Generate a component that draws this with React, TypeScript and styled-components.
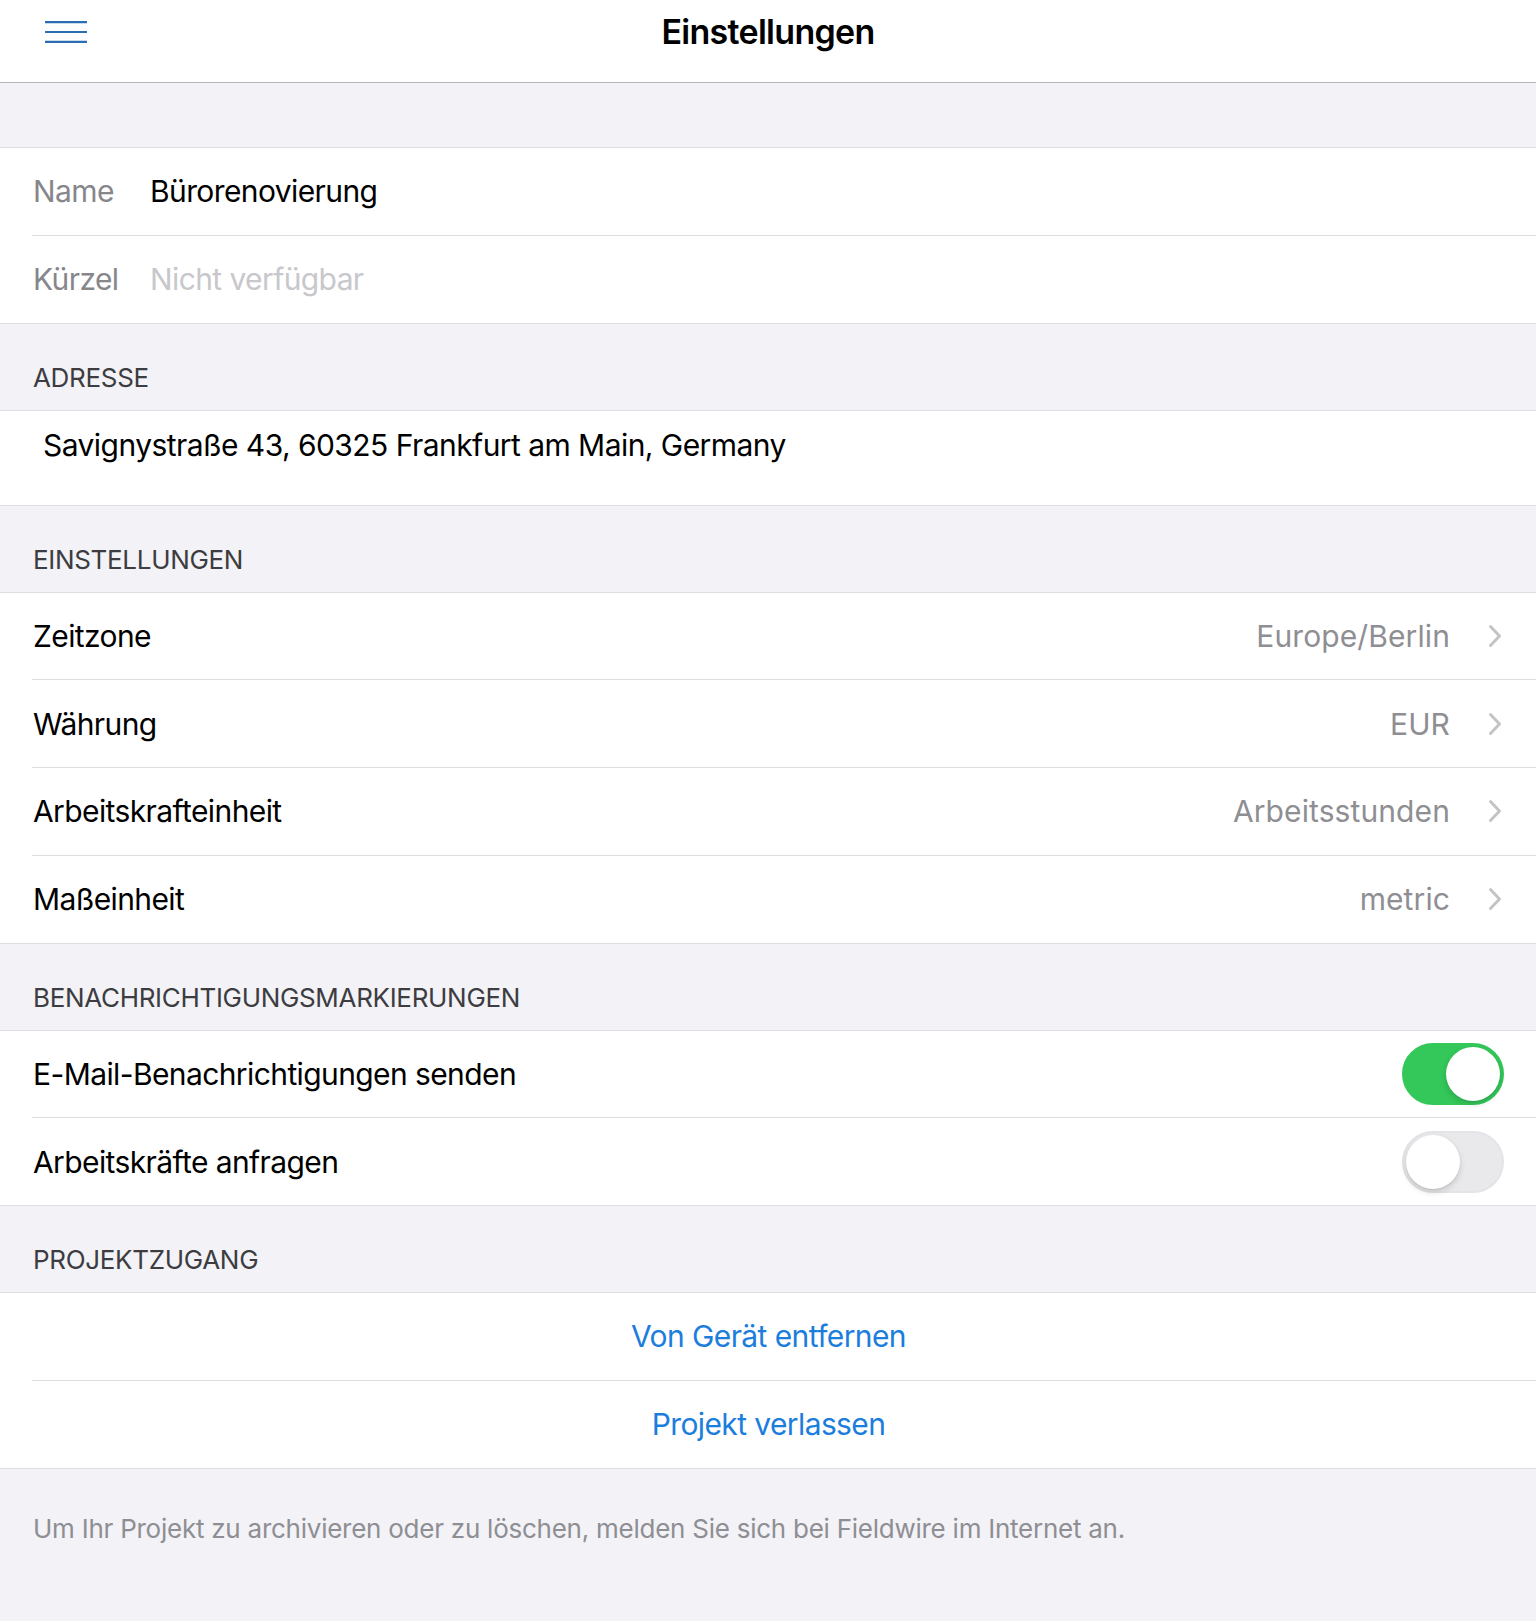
import React from "react";
import styled, { createGlobalStyle } from "styled-components";

const GlobalStyle = createGlobalStyle`
  html, body {
    margin: 0;
    padding: 0;
    background: #f2f2f7;
  }
  body {
    font-family: Inter, "Noto Sans", "Liberation Sans", sans-serif;
    -webkit-font-smoothing: antialiased;
  }
  * { box-sizing: border-box; }
`;

const SEP = "#dedee2";

const Page = styled.div`
  min-height: 1621px;
  background: #f2f2f7;
  display: flex;
  flex-direction: column;
`;

const TopBar = styled.header`
  height: 83px;
  background: #ffffff;
  border-bottom: 1px solid #b4b4b8;
  display: grid;
  grid-template-columns: 1fr auto 1fr;
  align-items: start;
`;

const MenuButton = styled.button`
  justify-self: start;
  margin: 21px 0 0 45px;
  padding: 0;
  border: 0;
  background: transparent;
  width: 42px;
  height: 22px;
  display: flex;
  cursor: pointer;
`;

const Title = styled.h1`
  margin: 12px 0 0;
  font-size: 34px;
  line-height: 40px;
  font-weight: 600;
  color: #000;
  letter-spacing: -0.7px;
`;

const Spacer = styled.div`
  height: 64px;
`;

const Group = styled.section`
  background: #ffffff;
  border-top: 1px solid ${SEP};
  border-bottom: 1px solid ${SEP};
`;

const SectionHeader = styled.h2`
  margin: 0;
  height: 86px;
  padding: 38px 33px 0;
  font-size: 26px;
  line-height: 32px;
  font-weight: 400;
  color: #3c3c41;
  text-transform: uppercase;
  letter-spacing: -0.32px;
`;

const Row = styled.div<{ $center?: boolean }>`
  box-sizing: content-box;
  height: 86.75px;
  margin-left: 32px;
  padding: 0 32px 0 1px;
  display: flex;
  align-items: center;
  justify-content: ${(p) => (p.$center ? "center" : "flex-start")};
  font-size: 30px;
  line-height: 36px;
  letter-spacing: -0.6px;
  color: #000;
  & + & {
    border-top: 1px solid ${SEP};
  }
`;

const FieldLabel = styled.span`
  width: 117px;
  flex: none;
  color: #86868b;
`;

const FieldValue = styled.span<{ $placeholder?: boolean }>`
  color: ${(p) => (p.$placeholder ? "#c7c7cc" : "#000")};
`;

const AddressRow = styled.div`
  height: 94px;
  padding: 16px 32px 0 43px;
  font-size: 30px;
  line-height: 36px;
  letter-spacing: -0.55px;
  color: #000;
`;

const Label = styled.span`
  flex: 1;
`;

const Value = styled.span`
  color: #8e8e93;
  margin-right: 38px;
  letter-spacing: 0.1px;
`;

const Chevron = styled.svg`
  width: 14px;
  height: 24px;
  flex: none;
  margin-right: 2px;
`;

const SwitchTrack = styled.button<{ $on: boolean }>`
  position: relative;
  width: 102px;
  height: 62px;
  flex: none;
  padding: 0;
  border-radius: 31px;
  border: 2px solid ${(p) => (p.$on ? "#34c759" : "#e4e4e8")};
  background: ${(p) => (p.$on ? "#34c759" : "#e9e9eb")};
  cursor: pointer;
`;

const SwitchKnob = styled.span<{ $on: boolean }>`
  position: absolute;
  top: 2px;
  left: ${(p) => (p.$on ? "42px" : "2px")};
  width: 54px;
  height: 54px;
  border-radius: 50%;
  background: #ffffff;
  box-shadow: 0 3px 6px rgba(0, 0, 0, 0.15), 0 1px 1px rgba(0, 0, 0, 0.08);
`;

const ActionText = styled.span`
  color: #1b7ddc;
`;

const Footer = styled.p`
  margin: 0;
  padding: 44px 33px 0;
  font-size: 26px;
  line-height: 32px;
  letter-spacing: -0.25px;
  color: #8e8e93;
`;

const ChevronIcon = () => (
  <Chevron viewBox="0 0 14 24" fill="none">
    <polyline
      points="2.5,2.5 11.5,12 2.5,21.5"
      stroke="#c4c4c8"
      strokeWidth="3"
      strokeLinecap="round"
      strokeLinejoin="round"
    />
  </Chevron>
);

const Switch = ({ on }: { on: boolean }) => (
  <SwitchTrack $on={on} aria-pressed={on}>
    <SwitchKnob $on={on} />
  </SwitchTrack>
);

const settings = [
  { label: "Zeitzone", value: "Europe/Berlin" },
  { label: "Währung", value: "EUR" },
  { label: "Arbeitskrafteinheit", value: "Arbeitsstunden" },
  { label: "Maßeinheit", value: "metric" },
];

export default function App() {
  return (
    <Page>
      <GlobalStyle />
      <TopBar>
        <MenuButton aria-label="Menü">
          <svg width="42" height="22" viewBox="0 0 42 22">
            <g stroke="#2a6db2" strokeWidth="2.2">
              <line x1="0" y1="1.2" x2="42" y2="1.2" />
              <line x1="0" y1="11" x2="42" y2="11" />
              <line x1="0" y1="20.8" x2="42" y2="20.8" />
            </g>
          </svg>
        </MenuButton>
        <Title>Einstellungen</Title>
        <div />
      </TopBar>

      <Spacer />

      <Group>
        <Row>
          <FieldLabel>Name</FieldLabel>
          <FieldValue>Bürorenovierung</FieldValue>
        </Row>
        <Row>
          <FieldLabel>Kürzel</FieldLabel>
          <FieldValue $placeholder>Nicht verfügbar</FieldValue>
        </Row>
      </Group>

      <SectionHeader>Adresse</SectionHeader>
      <Group>
        <AddressRow>Savignystraße 43, 60325 Frankfurt am Main, Germany</AddressRow>
      </Group>

      <SectionHeader>Einstellungen</SectionHeader>
      <Group>
        {settings.map((s) => (
          <Row key={s.label}>
            <Label>{s.label}</Label>
            <Value>{s.value}</Value>
            <ChevronIcon />
          </Row>
        ))}
      </Group>

      <SectionHeader>Benachrichtigungsmarkierungen</SectionHeader>
      <Group>
        <Row>
          <Label>E-Mail-Benachrichtigungen senden</Label>
          <Switch on />
        </Row>
        <Row>
          <Label>Arbeitskräfte anfragen</Label>
          <Switch on={false} />
        </Row>
      </Group>

      <SectionHeader>Projektzugang</SectionHeader>
      <Group>
        <Row $center>
          <ActionText>Von Gerät entfernen</ActionText>
        </Row>
        <Row $center>
          <ActionText>Projekt verlassen</ActionText>
        </Row>
      </Group>

      <Footer>
        Um Ihr Projekt zu archivieren oder zu löschen, melden Sie sich bei Fieldwire im Internet an.
      </Footer>
    </Page>
  );
}
